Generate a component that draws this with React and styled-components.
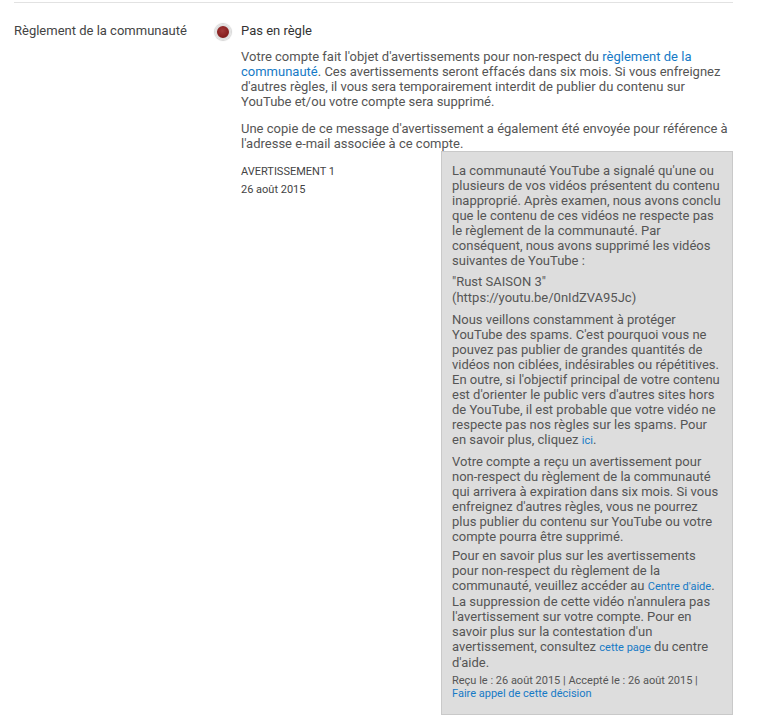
import React from 'react';
import styled, { createGlobalStyle } from 'styled-components';

const GlobalStyle = createGlobalStyle`
  html, body {
    margin: 0;
    padding: 0;
    background: #ffffff;
  }
  body {
    font-family: Roboto, "Liberation Sans", Arial, sans-serif;
  }
`;

const Page = styled.div`
  width: 762px;
  height: 726px;
  box-sizing: border-box;
  padding: 2px 29px 0 14px;
  overflow: hidden;
`;

const Divider = styled.div`
  height: 1px;
  background: #e2e2e2;
`;

const SettingRow = styled.div`
  display: grid;
  grid-template-columns: 201px 26px 1fr;
  padding-top: 20px;
`;

const Label = styled.div`
  font-size: 13px;
  line-height: 15px;
  color: #444444;
`;

const DotCell = styled.div`
  padding-top: 0px;
`;

const StatusDot = styled.span`
  display: block;
  width: 12px;
  height: 12px;
  margin-top: 1px;
  border-radius: 50%;
  border: 2px solid #e0e0e0;
  background: radial-gradient(circle at 45% 40%, #a23a3a 0%, #8a2222 55%, #6a1414 100%);
  box-shadow: 0 0 1px 1px #d4d4d4;
`;

const Content = styled.div`
  display: flex;
  flex-direction: column;
`;

const Status = styled.div`
  font-size: 13px;
  line-height: 15px;
  color: #333333;
`;

const Paragraph = styled.p`
  margin: 11px 0 0 0;
  font-size: 13px;
  line-height: 15px;
  color: #555555;

  & + & {
    margin-top: 12px;
  }
`;

const Link = styled.a`
  color: #167ac6;
  text-decoration: none;
`;

const SmallLink = styled(Link)`
  font-size: 11px;
`;

const StrikeRow = styled.div`
  display: flex;
  align-items: flex-start;
  margin-top: 0;
`;

const StrikeMeta = styled.div`
  width: 200px;
  padding-top: 12px;
  font-size: 11px;
  line-height: 18px;
  color: #444444;
`;

const DetailBox = styled.div`
  width: 292px;
  box-sizing: border-box;
  padding: 11px 10px 14px 10px;
  background: #dddddd;
  border: 1px solid #c9c9c9;
  color: #555555;
`;

const BoxParagraph = styled.p`
  margin: 0 0 ${(p) => p.$gap || 6}px 0;
  font-size: 13px;
  line-height: ${(p) => p.$lineHeight || 15}px;
`;

const BoxFooter = styled.div`
  font-size: 11px;
  line-height: 13px;
  color: #555555;
`;

const StrikeDetails = function () {
  return (
    <DetailBox>
      <BoxParagraph>
        La communauté YouTube a signalé qu'une ou plusieurs de vos vidéos présentent du contenu
        inapproprié. Après examen, nous avons conclu que le contenu de ces vidéos ne respecte pas
        le règlement de la communauté. Par conséquent, nous avons supprimé les vidéos suivantes de
        YouTube :
      </BoxParagraph>
      <BoxParagraph $lineHeight={16}>
        "Rust SAISON 3"
        <br />
        (https://youtu.be/0nIdZVA95Jc)
      </BoxParagraph>
      <BoxParagraph>
        Nous veillons constamment à protéger YouTube des spams. C'est pourquoi vous ne pouvez pas
        publier de grandes quantités de vidéos non ciblées, indésirables ou répétitives. En outre,
        si l'objectif principal de votre contenu est d'orienter le public vers d'autres sites hors
        de YouTube, il est probable que votre vidéo ne respecte pas nos règles sur les spams. Pour
        en savoir plus, cliquez <SmallLink href="#">ici</SmallLink>.
      </BoxParagraph>
      <BoxParagraph $gap={4}>
        Votre compte a reçu un avertissement pour non-respect du règlement de la communauté qui
        arrivera à expiration dans six mois. Si vous enfreignez d'autres règles, vous ne pourrez
        plus publier du contenu sur YouTube ou votre compte pourra être supprimé.
      </BoxParagraph>
      <BoxParagraph $gap={4}>
        Pour en savoir plus sur les avertissements pour non-respect du règlement de la communauté,
        veuillez accéder au <SmallLink href="#">Centre d'aide</SmallLink>. La suppression de cette
        vidéo n'annulera pas l'avertissement sur votre compte. Pour en savoir plus sur la
        contestation d'un avertissement, consultez <SmallLink href="#">cette page</SmallLink> du
        centre d'aide.
      </BoxParagraph>
      <BoxFooter>
        Reçu le : 26 août 2015 | Accepté le : 26 août 2015 |
        <br />
        <Link href="#">Faire appel de cette décision</Link>
      </BoxFooter>
    </DetailBox>
  );
};

const App = function () {
  return (
    <Page>
      <GlobalStyle />
      <Divider />
      <SettingRow>
        <Label>Règlement de la communauté</Label>
        <DotCell>
          <StatusDot />
        </DotCell>
        <Content>
          <Status>Pas en règle</Status>
          <Paragraph>
            Votre compte fait l'objet d'avertissements pour non-respect du{' '}
            <Link href="#">règlement de la communauté</Link>. Ces avertissements seront effacés
            dans six mois. Si vous enfreignez d'autres règles, il vous sera temporairement interdit
            de publier du contenu sur YouTube et/ou votre compte sera supprimé.
          </Paragraph>
          <Paragraph>
            Une copie de ce message d'avertissement a également été envoyée pour référence à
            l'adresse e-mail associée à ce compte.
          </Paragraph>

          <StrikeRow>
            <StrikeMeta>
              <div>AVERTISSEMENT 1</div>
              <div>26 août 2015</div>
            </StrikeMeta>
            <StrikeDetails />
          </StrikeRow>
        </Content>
      </SettingRow>
    </Page>
  );
};

export default App;
